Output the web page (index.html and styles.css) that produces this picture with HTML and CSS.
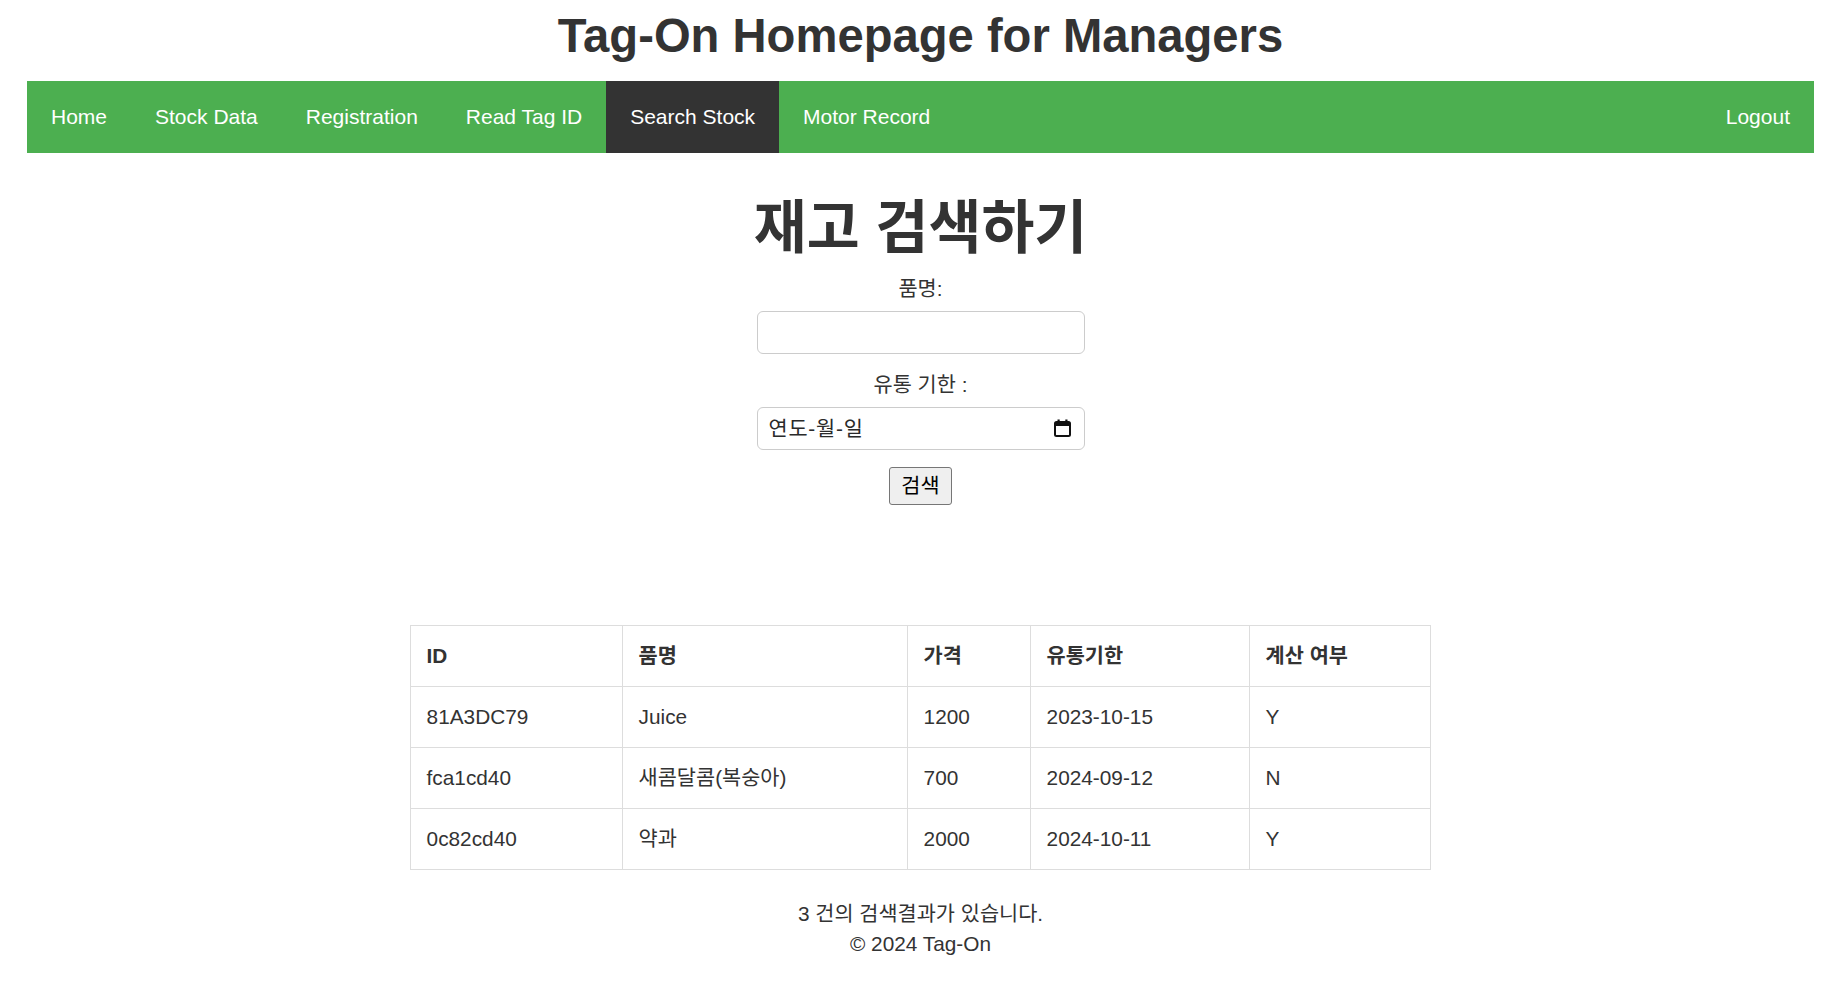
FILE: index.html
```html
<!DOCTYPE html>
<html lang="ko">
<head>
<meta charset="utf-8">
<title>Tag-On Homepage for Managers</title>
<link rel="stylesheet" href="styles.css">
</head>
<body>
<div class="page">
  <h1 class="site-title">Tag-On Homepage for Managers</h1>
  <nav class="topnav">
    <a class="nav-link" href="#">Home</a>
    <a class="nav-link" href="#">Stock Data</a>
    <a class="nav-link" href="#">Registration</a>
    <a class="nav-link" href="#">Read Tag ID</a>
    <a class="nav-link active" href="#">Search Stock</a>
    <a class="nav-link" href="#">Motor Record</a>
    <a class="nav-link logout" href="#">Logout</a>
  </nav>

  <main class="content">
    <h2 class="page-heading">재고 검색하기</h2>
    <form class="search-form">
      <label class="field-label" for="name">품명:</label>
      <input class="field-input" type="text" id="name">
      <label class="field-label" for="exp">유통 기한 :</label>
      <div class="date-field">
        <input class="field-input date-input" type="text" id="exp" placeholder="연도-월-일">
        <svg class="cal-icon" width="17" height="18" viewBox="0 0 17 18" aria-hidden="true">
          <rect x="1" y="3" width="15" height="14" rx="1.5" fill="none" stroke="#111" stroke-width="2"/>
          <rect x="1" y="3" width="15" height="4" fill="#111"/>
          <rect x="3.5" y="0.5" width="2.2" height="3" fill="#111"/>
          <rect x="11.3" y="0.5" width="2.2" height="3" fill="#111"/>
        </svg>
      </div>
      <button class="search-btn" type="button">검색</button>
    </form>

    <table class="result-table">
      <thead>
        <tr>
          <th class="col-id">ID</th>
          <th class="col-name">품명</th>
          <th class="col-price">가격</th>
          <th class="col-exp">유통기한</th>
          <th class="col-paid">계산 여부</th>
        </tr>
      </thead>
      <tbody>
        <tr><td>81A3DC79</td><td>Juice</td><td>1200</td><td>2023-10-15</td><td>Y</td></tr>
        <tr><td>fca1cd40</td><td>새콤달콤(복숭아)</td><td>700</td><td>2024-09-12</td><td>N</td></tr>
        <tr><td>0c82cd40</td><td>약과</td><td>2000</td><td>2024-10-11</td><td>Y</td></tr>
      </tbody>
    </table>

    <footer class="footer">
      <div class="footer-line">3 건의 검색결과가 있습니다.</div>
      <div class="footer-line">© 2024 Tag-On</div>
    </footer>
  </main>
</div>
</body>
</html>
```

FILE: styles.css
```css
* { box-sizing: border-box; }

html, body {
  margin: 0;
  padding: 0;
  background: #fff;
}

body {
  font-family: "Liberation Sans", "Noto Sans CJK KR", Arial, sans-serif;
  font-size: 20.8px;
  color: #333;
}

.page {
  padding: 0 32px 0 27px;
}

.site-title {
  margin: 9px 0 18px;
  font-size: 47.2px;
  font-weight: bold;
  line-height: 54px;
  text-align: center;
  color: #333;
}

.topnav {
  display: flex;
  background: #4caf50;
  height: 72px;
}

.nav-link {
  display: block;
  padding: 24px 24px;
  line-height: 24px;
  font-size: 21px;
  color: #fff;
  text-decoration: none;
}

.nav-link.active {
  background: #333;
}

.nav-link.logout {
  margin-left: auto;
}

.content {
  display: flex;
  flex-direction: column;
  align-items: center;
}

.page-heading {
  margin: 39px 0 10px;
  font-size: 57.5px;
  line-height: 72px;
  font-weight: bold;
  color: #333;
}

.search-form {
  display: flex;
  flex-direction: column;
  align-items: center;
}

.field-label {
  display: block;
  font-size: 20.8px;
  line-height: 24px;
  color: #333;
  margin: 2.5px 0 10.5px;
}

.field-input {
  display: block;
  width: 328px;
  height: 43px;
  border: 1px solid #ccc;
  border-radius: 6px;
  padding: 0 11px;
  font-family: "Liberation Sans", "Noto Sans CJK KR", sans-serif;
  font-size: 20.8px;
  color: #222;
  background: #fff;
  margin-bottom: 16px;
  outline: none;
}

.date-field {
  position: relative;
  width: 328px;
}

.date-input {
  letter-spacing: 0.8px;
}

.date-input::placeholder {
  color: #2a2a2a;
  opacity: 1;
}

.cal-icon {
  position: absolute;
  left: 297px;
  top: 12px;
}

.search-btn {
  display: block;
  margin-top: 1px;
  height: 38px;
  padding: 0 11px;
  font-family: "Liberation Sans", "Noto Sans CJK KR", sans-serif;
  font-size: 20.8px;
  line-height: 24px;
  color: #000;
  background: #efefef;
  border: 1px solid #767676;
  border-radius: 3px;
}

.result-table {
  margin-top: 120px;
  border-collapse: collapse;
  width: 1020px;
  table-layout: fixed;
}

.result-table th,
.result-table td {
  border: 1px solid #ddd;
  padding: 0 15.6px;
  height: 61px;
  line-height: 24px;
  text-align: left;
  font-size: 20.8px;
  color: #333;
}

.result-table th {
  font-weight: bold;
}

.col-id { width: 212px; }
.col-name { width: 285px; }
.col-price { width: 123px; }
.col-exp { width: 219px; }
.col-paid { width: 181px; }

.footer {
  margin-top: 29px;
  text-align: center;
}

.footer-line {
  line-height: 30px;
  font-size: 20.8px;
  color: #333;
}
```
